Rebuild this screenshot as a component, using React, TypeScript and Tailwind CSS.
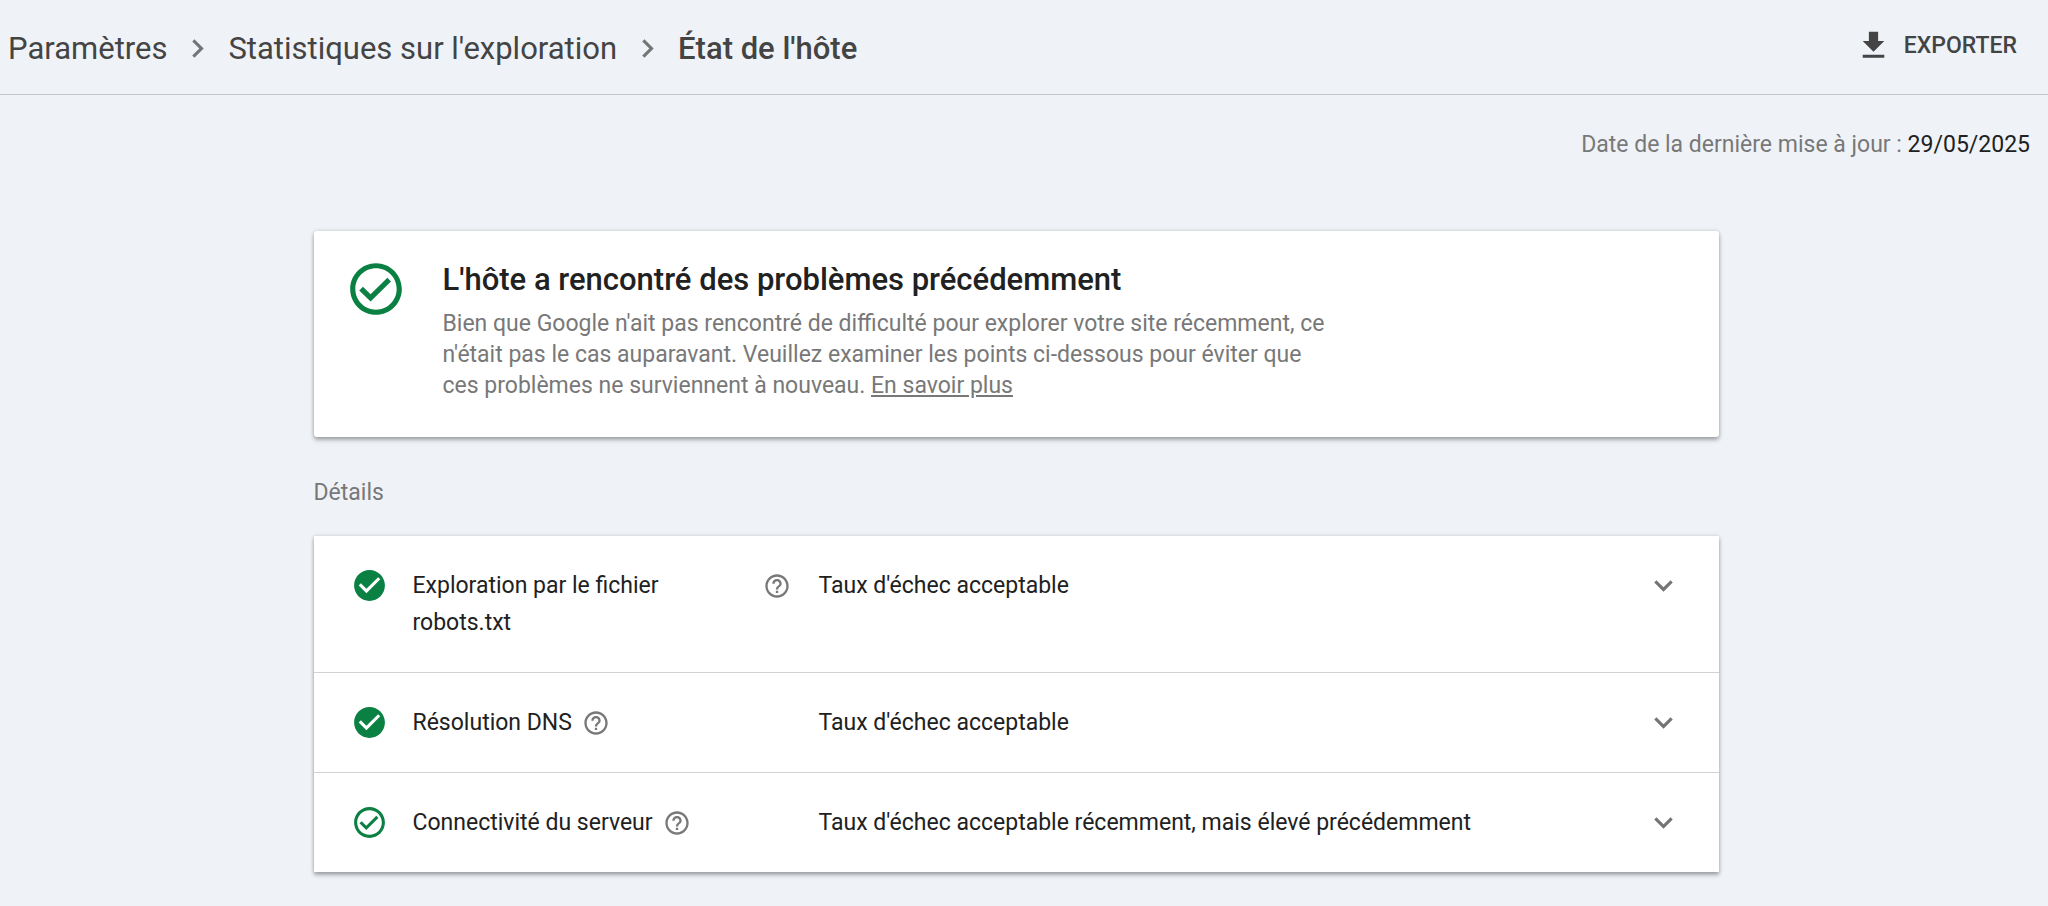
import type { ReactNode } from "react"

type RowStatus = "ok" | "recovered"

const crumbs = ["Paramètres", "Statistiques sur l'exploration"]

const rows: { label: string; result: string; status: RowStatus }[] = [
  {
    label: "Exploration par le fichier robots.txt",
    result: "Taux d'échec acceptable",
    status: "ok",
  },
  {
    label: "Résolution DNS",
    result: "Taux d'échec acceptable",
    status: "ok",
  },
  {
    label: "Connectivité du serveur",
    result: "Taux d'échec acceptable récemment, mais élevé précédemment",
    status: "recovered",
  },
]

function Icon({
  className,
  children,
}: {
  className: string
  children: ReactNode
}) {
  return (
    <svg
      viewBox="0 0 24 24"
      fill="currentColor"
      aria-hidden="true"
      className={`shrink-0 ${className}`}
    >
      {children}
    </svg>
  )
}

function CheckFilled({ className }: { className: string }) {
  return (
    <Icon className={className}>
      <path d="M12 2C6.48 2 2 6.48 2 12s4.48 10 10 10 10-4.48 10-10S17.52 2 12 2zm-2 15l-5-5 1.41-1.41L10 14.17l7.59-7.59L19 8l-9 9z" />
    </Icon>
  )
}

function CheckOutline({ className }: { className: string }) {
  return (
    <Icon className={className}>
      <path d="M16.4 7.66L9.9 14.05l-2.95-2.93L5.5 12.54l4.4 4.34 7.9-7.8zM12 2C6.48 2 2 6.48 2 12s4.48 10 10 10 10-4.48 10-10S17.52 2 12 2zm0 18c-4.42 0-8-3.58-8-8s3.58-8 8-8 8 3.58 8 8-3.58 8-8 8z" />
    </Icon>
  )
}

function ChevronRight() {
  return (
    <Icon className="size-[37px] text-[#757575]">
      <path d="M10 6L8.59 7.41 13.17 12l-4.58 4.59L10 18l6-6z" />
    </Icon>
  )
}

function Header() {
  return (
    <header className="flex items-start justify-between border-b border-[#c4c7c5] pl-2 pr-[31px] text-[#444]">
      <nav aria-label="Fil d'Ariane" className="pb-[27px] pt-[30px]">
        <ol className="flex items-center gap-3 text-[31px] leading-[37px]">
          {crumbs.map((c) => (
            <li key={c} className="flex items-center gap-3">
              <a href="#">{c}</a>
              <ChevronRight />
            </li>
          ))}
          <li aria-current="page" className="font-medium">
            {"État de l'hôte"}
          </li>
        </ol>
      </nav>
      <button
        type="button"
        className="mt-[27px] flex items-center gap-3 text-[23px] font-medium leading-[37px]"
      >
        <Icon className="size-[37px]">
          <path d="M19 9h-4V3H9v6H5l7 7 7-7zM5 18v2h14v-2H5z" />
        </Icon>
        EXPORTER
      </button>
    </header>
  )
}

function SummaryCard() {
  return (
    <section className="flex items-start gap-9 rounded-[3px] bg-white pb-9 pl-[31px] pr-[37px] pt-[27px] shadow-[0_3px_4px_rgba(0,0,0,0.3),0_0_4px_rgba(0,0,0,0.15)]">
      <CheckOutline className="size-[62px] text-[#0b8043]" />
      <div>
        <h1 className="text-[31px] font-medium leading-[43px] text-[#212121]">
          {"L'hôte a rencontré des problèmes précédemment"}
        </h1>
        <p className="mt-[7px] max-w-[892px] leading-[31px] text-[#787878]">
          {
            "Bien que Google n'ait pas rencontré de difficulté pour explorer votre site récemment, ce n'était pas le cas auparavant. Veuillez examiner les points ci-dessous pour éviter que ces problèmes ne surviennent à nouveau."
          }{" "}
          <a href="#" className="underline">
            En savoir plus
          </a>
        </p>
      </div>
    </section>
  )
}

function DetailRow({ label, result, status }: (typeof rows)[number]) {
  return (
    <li className="flex items-start px-[37px] py-[31px]">
      {status === "ok" ? (
        <CheckFilled className="size-[37px] text-[#0b8043]" />
      ) : (
        <CheckOutline className="size-[37px] text-[#0b8043]" />
      )}
      <div className="ml-[25px] flex w-[378px] shrink-0 items-start gap-[10px]">
        <span>{label}</span>
        <button
          type="button"
          aria-label="Aide"
          className="flex h-[37px] shrink-0 items-center text-[#787878]"
        >
          <Icon className="size-7">
            <path d="M11 18h2v-2h-2v2zm1-16C6.48 2 2 6.48 2 12s4.48 10 10 10 10-4.48 10-10S17.52 2 12 2zm0 18c-4.41 0-8-3.59-8-8s3.59-8 8-8 8 3.59 8 8-3.59 8-8 8zm0-14c-2.21 0-4 1.79-4 4h2c0-1.1.9-2 2-2s2 .9 2 2c0 2-3 1.75-3 5h2c0-2.25 3-2.5 3-5 0-2.21-1.79-4-4-4z" />
          </Icon>
        </button>
      </div>
      <span className="ml-7 grow">{result}</span>
      <button type="button" aria-label="Développer" className="text-[#757575]">
        <Icon className="size-[37px]">
          <path d="M16.59 8.59L12 13.17 7.41 8.59 6 10l6 6 6-6z" />
        </Icon>
      </button>
    </li>
  )
}

export default function App() {
  return (
    <div className="min-h-screen bg-[#eff3f8] font-['Roboto',sans-serif] text-[23px]">
      <Header />
      <p className="pr-[18px] pt-[31px] text-right leading-[37px] text-[#787878]">
        {"Date de la dernière mise à jour : "}
        <span className="text-[#212121]">29/05/2025</span>
      </p>
      <main className="pb-9 pr-4 pt-[68px]">
        <div className="mx-auto max-w-[1405px]">
          <SummaryCard />
          <h2 className="mb-[25px] mt-[37px] leading-[37px] text-[#787878]">
            Détails
          </h2>
          <ul className="divide-y divide-[#d2d2d2] bg-white leading-[37px] text-[#212121] shadow-[0_3px_4px_rgba(0,0,0,0.3),0_0_4px_rgba(0,0,0,0.15)]">
            {rows.map((row) => (
              <DetailRow key={row.label} {...row} />
            ))}
          </ul>
        </div>
      </main>
    </div>
  )
}
